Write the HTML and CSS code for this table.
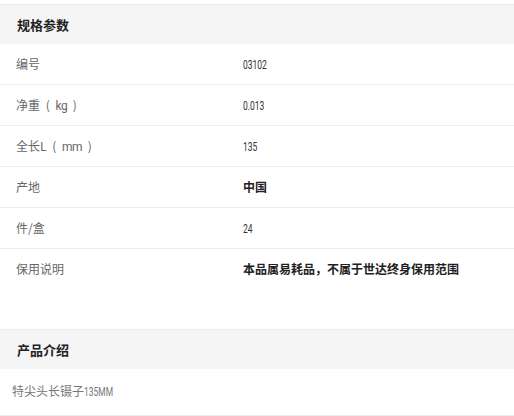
FILE: index.html
```html
<!DOCTYPE html>
<html lang="zh-CN">
<head>
<meta charset="utf-8">
<link rel="stylesheet" href="styles.css">
</head>
<body>
<div class="page">
  <section class="spec">
    <h2 class="head">规格参数</h2>
    <div class="row"><div class="label">编号</div><div class="value"><span class="num">03102</span></div></div>
    <div class="row"><div class="label">净重 ( <span class="unit">kg</span> )</div><div class="value"><span class="num">0.013</span></div></div>
    <div class="row"><div class="label">全长L ( <span class="unit">mm</span> )</div><div class="value"><span class="num">135</span></div></div>
    <div class="row"><div class="label">产地</div><div class="value strong">中国</div></div>
    <div class="row"><div class="label">件/盒</div><div class="value"><span class="num">24</span></div></div>
    <div class="row last"><div class="label">保用说明</div><div class="value strong">本品属易耗品，不属于世达终身保用范围</div></div>
  </section>
  <section class="intro">
    <h2 class="head">产品介绍</h2>
    <div class="intro-text">特尖头长镊子<span class="num">135MM</span></div>
  </section>
</div>
</body>
</html>
```
FILE: styles.css
```css
html, body {
  margin: 0;
  padding: 0;
  background: #fff;
}
body {
  font-family: "Noto Sans CJK SC", "Noto Sans", sans-serif;
  font-size: 12px;
  color: #333;
}
.page {
  width: 514px;
  padding-top: 4px;
}
.head {
  margin: 0;
  height: 39px;
  line-height: 40px;
  border-top: 1px solid #ececec;
  background: #f5f5f5;
  padding-left: 17px;
  font-size: 13px;
  font-weight: 700;
  color: #222;
}
.row {
  display: grid;
  grid-template-columns: 227px 1fr;
  height: 40px;
  line-height: 40px;
  border-bottom: 1px solid #ececec;
  padding-left: 16px;
}
.row.last {
  height: 80px;
  border-bottom: none;
}
.label {
  color: #666;
  word-spacing: 3px;
}
.value {
  color: #333;
}
.value.strong {
  font-weight: 700;
  color: #222;
}
.num {
  display: inline-block;
  font-family: "Roboto", "Liberation Sans", sans-serif;
  font-size: 12.5px;
  transform: scaleX(0.68);
  transform-origin: left center;
}
.unit {
  font-family: "Roboto", "Liberation Sans", sans-serif;
  letter-spacing: -0.5px;
}
.intro-text .num {
  margin-right: -1em;
}
.intro-text {
  height: 46px;
  line-height: 44px;
  padding-left: 12px;
  color: #777;
  border-bottom: 1px solid #ececec;
}
```
